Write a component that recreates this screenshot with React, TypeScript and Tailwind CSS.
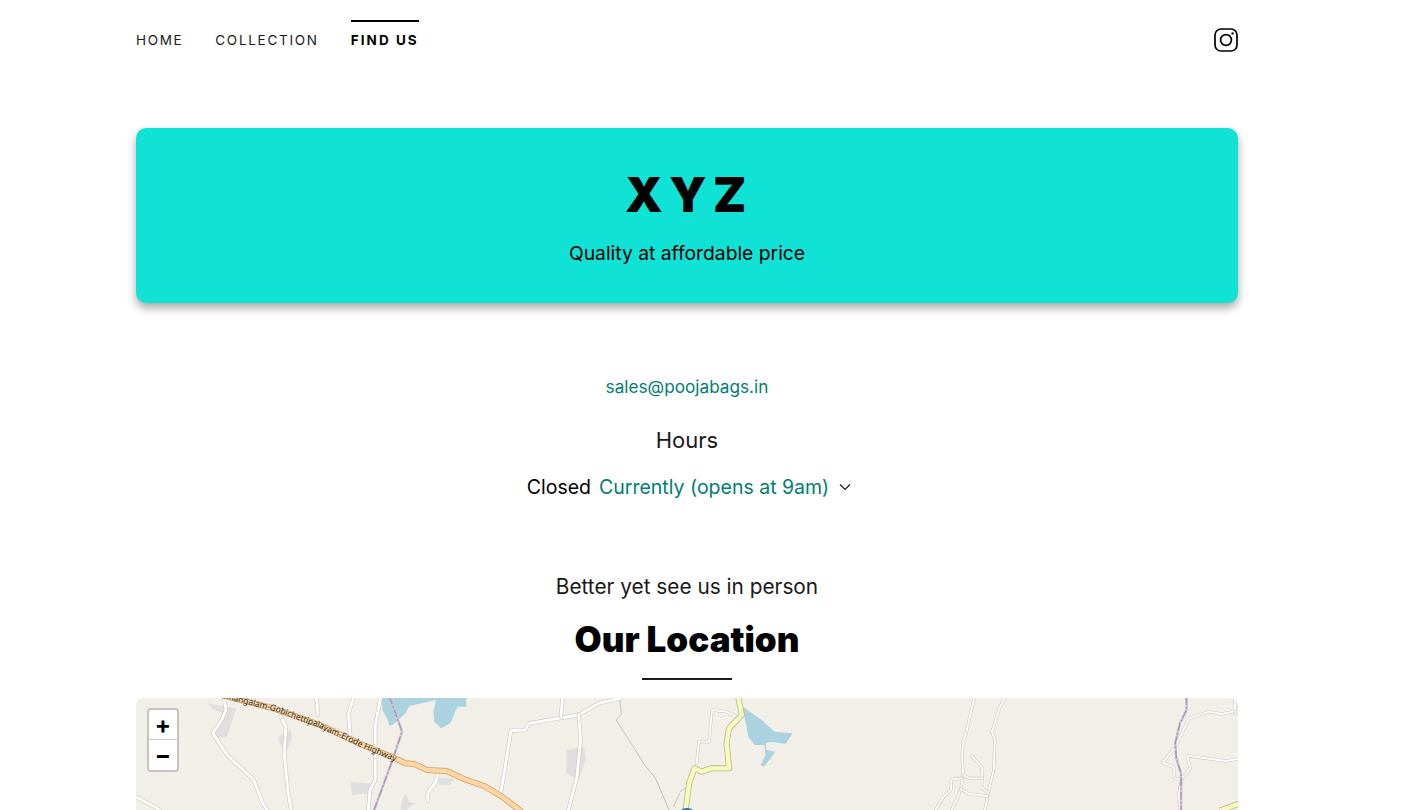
const sans = { fontFamily: '"Inter", "Liberation Sans", sans-serif' };

function Road({ d, w = 4 }: { d: string; w?: number }) {
  return (
    <>
      <path d={d} fill="none" stroke="#c9c5bf" strokeWidth={w} strokeLinejoin="round" strokeLinecap="round" vectorEffect="non-scaling-stroke" />
      <path d={d} fill="none" stroke="#ffffff" strokeWidth={w - 1.2} strokeLinejoin="round" strokeLinecap="round" vectorEffect="non-scaling-stroke" />
    </>
  );
}

function Border({ d }: { d: string }) {
  return (
    <>
      <path d={d} fill="none" stroke="#cfc6d3" strokeWidth={2.5} vectorEffect="non-scaling-stroke" />
      <path d={d} fill="none" stroke="#ac94b4" strokeWidth={1.4} strokeDasharray="8 2 2 2" vectorEffect="non-scaling-stroke" />
    </>
  );
}

function MapDrawing() {
  return (
    <svg className="block w-full h-full" viewBox="0 0 1102 400" preserveAspectRatio="xMinYMin slice">
      <rect width="1102" height="400" fill="#f2efe9" />

      {/* left half */}
      <g transform="translate(-16,-8) scale(0.357,0.3333)">
        <path d="M245 40 L325 55 L300 140 L265 145 L275 95 L290 70 L265 60 Z" fill="#e0dfdf" />
        <path d="M445 140 L480 120 L480 150 L465 185 L445 155 Z" fill="#e0dfdf" />
        <path d="M645 275 L700 280 L705 310 L650 315 Z" fill="#e0dfdf" />
        <path d="M890 265 L935 265 L925 285 L895 285 Z" fill="#e0dfdf" />
        <path d="M790 330 L800 312 L810 335 L828 340 L810 350 L800 365 L785 365 Z" fill="#e0dfdf" />
        <path d="M1250 180 L1300 170 L1305 205 L1285 270 L1250 250 Z" fill="#e0dfdf" />
        <path d="M733 20 L970 20 L970 50 L945 50 L925 100 L900 115 L880 95 L878 65 L885 30 L810 48 L800 70 L770 100 L755 108 L750 90 L735 60 Z" fill="#aad3df" />

        <Road d="M290 20 L297 60 L285 90 L260 130 L300 195 L375 270 L400 340 L415 365" />
        <Road d="M550 20 L555 75" />
        <Road d="M450 80 L465 110 L460 190 L470 300 L480 365" />
        <Road d="M655 20 L640 70 L645 135" />
        <Road d="M730 20 L715 110 L715 270 L700 300 L695 365" />
        <Road d="M45 322 L100 352 L115 365" />
        <Road d="M890 250 L885 275 L862 310 L862 332" />
        <Road d="M1065 320 L1085 190 L1095 122 L1135 120 L1145 100 L1285 75 L1340 40 L1400 25" />
        <Road d="M1285 75 L1290 150 L1280 260 L1255 365" />
        <Road d="M1240 20 L1235 80" />
        <path d="M1400 30 L1405 70 L1390 90 L1470 225 L1500 265 L1540 365" fill="none" stroke="#c4c2be" strokeWidth={1} vectorEffect="non-scaling-stroke" />
        <path d="M1568 310 L1550 350" fill="none" stroke="#c4c2be" strokeWidth={1} vectorEffect="non-scaling-stroke" />
        <Border d="M755 20 L790 125 L760 220 L710 365" />

        <path d="M285 15 L430 55 L560 105 L680 165 L770 205 L800 220 L825 222 L860 240 L915 243 L965 268 L1020 288 L1070 320 L1125 365" fill="none" stroke="#d2a05f" strokeWidth={6} vectorEffect="non-scaling-stroke" />
        <path d="M285 15 L430 55 L560 105 L680 165 L770 205 L800 220 L825 222 L860 240 L915 243 L965 268 L1020 288 L1070 320 L1125 365" fill="none" stroke="#fcd6a4" strokeWidth={4.4} vectorEffect="non-scaling-stroke" />
      </g>

      {/* road label */}
      <path id="highway-label" d="M86 -3 L138 10 L184 27 L227 47 L260 61" fill="none" />
      <text fontSize="8.4" fill="#2b2b2b" dy="2.8" textAnchor="end" style={{ fontFamily: '"Noto Sans", sans-serif' }}>
        <textPath href="#highway-label" startOffset="100%">
          Sathyamangalam-Gobichettipalayam-Erode Highway
        </textPath>
      </text>

      {/* right half */}
      <g transform="translate(544,-8) scale(0.3636,0.3333)">
        <path d="M172 50 L225 90 L260 125 L310 130 L290 162 L250 155 L236 160 L238 180 L262 185 L250 205 L230 230 L222 225 L235 195 L232 165 L205 165 L188 140 Z" fill="#aad3df" />

        <Road d="M45 230 L52 155 L80 155 L88 60 L125 65 L155 80" w={3} />
        <Road d="M130 238 L140 238" w={3} />
        <path d="M0 305 L20 290" fill="none" stroke="#c4c2be" strokeWidth={1} vectorEffect="non-scaling-stroke" />

        <path d="M160 20 L170 75 L135 115 L128 160 L135 235 L85 235 L60 245 L40 235 L25 280 L15 365" fill="none" stroke="#b9ba80" strokeWidth={6} strokeLinejoin="round" vectorEffect="non-scaling-stroke" />
        <path d="M160 20 L170 75 L135 115 L128 160 L135 235 L85 235 L60 245 L40 235 L25 280 L15 365" fill="none" stroke="#f7fabf" strokeWidth={4.4} strokeLinejoin="round" vectorEffect="non-scaling-stroke" />

        <Road d="M810 20 L795 90 L787 130 L778 155 L776 200 L779 255 L772 300 L760 330 L745 365" w={3} />
        <Road d="M898 20 L880 50 L858 125 L866 150 L863 240 L848 305 L838 365" w={3} />
        <Road d="M803 198 L830 232 L832 295 L848 310" w={3} />
        <Road d="M779 255 L795 265 L832 265" w={3} />
        <Road d="M775 265 L747 268 L745 300 L725 320 L700 365" w={3} />
        <Road d="M773 296 L795 312 L845 318" w={3} />

        <Road d="M1535 62 L1490 72 L1455 65 L1400 85 L1380 130 L1362 172 L1327 217 L1358 232 L1360 265 L1380 268 L1403 235 L1395 197 L1500 213 L1535 207" w={3} />
        <Road d="M1525 20 L1528 70" w={3} />
        <Road d="M1380 268 L1372 310 L1375 365" w={3} />
        <Border d="M1393 20 L1393 60 L1375 100 L1362 160 L1365 205 L1378 250 L1378 300 L1378 365" />

        <path d="M1485 362 L1540 340" fill="none" stroke="#b9ba80" strokeWidth={6} vectorEffect="non-scaling-stroke" />
        <path d="M1485 362 L1540 340" fill="none" stroke="#f7fabf" strokeWidth={4.4} vectorEffect="non-scaling-stroke" />
      </g>

      {/* marker */}
      <circle cx="551" cy="121" r="10.5" fill="#2a81cb" stroke="#2e6c97" />
    </svg>
  );
}

export default function App() {
  return (
    <div className="h-[810px] overflow-hidden bg-white text-[#1a1a1a]" style={sans}>
      <div className="ml-[136px] w-[1102px]">
        <nav className="flex h-[80px] items-center justify-between">
          <div className="flex h-[40px] gap-8 text-[13.5px] leading-none">
            <a className="flex items-center border-t-2 border-transparent tracking-[1.65px]">HOME</a>
            <a className="flex items-center border-t-2 border-transparent tracking-[1.72px]">COLLECTION</a>
            <a className="flex items-center border-t-2 border-black font-bold tracking-[2.05px] text-black">FIND US</a>
          </div>
          <svg width="26" height="26" viewBox="0 0 26 26" fill="none" stroke="#000" strokeWidth="1.7" className="mr-[-1px]">
            <rect x="2" y="2" width="22" height="22" rx="6" />
            <circle cx="13" cy="13" r="5.4" />
            <circle cx="19.6" cy="6.4" r="1.2" fill="#000" stroke="none" />
          </svg>
        </nav>

        <div className="mt-[48px] flex h-[175px] flex-col items-center rounded-[10px] bg-[#10e2d6] shadow-[0_5px_10px_rgba(0,0,0,0.35)]">
          <h1 className="ml-[4px] mt-[38px] text-[48px] font-black leading-[58px] tracking-[6.5px] text-black">XYZ</h1>
          <p className="mt-[15px] text-[19.3px] leading-[28px] text-black">Quality at affordable price</p>
        </div>

        <div className="flex flex-col items-center">
          <a className="mt-[72px] text-[17.2px] leading-[24px] text-[#007e70]">sales@poojabags.in</a>
          <h2 className="mt-[25px] text-[22px] leading-[32px]">Hours</h2>
          <div className="ml-[4px] mt-[17px] flex items-center text-[19.5px] leading-[28px]">
            <span className="text-black">Closed</span>
            <span className="ml-2 text-[#007e70]">Currently (opens at 9am)</span>
            <svg className="ml-[10px]" width="12" height="8" viewBox="0 0 12 8" fill="none" stroke="#1a1a1a" strokeWidth="1.2">
              <path d="M1 1.5 L6 6.5 L11 1.5" />
            </svg>
          </div>
          <p className="mt-[71px] text-[20.8px] leading-[30px]">Better yet see us in person</p>
          <h2 className="mt-[15px] text-[35px] font-black leading-[44px] text-black">Our Location</h2>
          <div className="mt-[17px] h-[2px] w-[90px] bg-[#1a1a1a]" />
        </div>

        <div className="relative mt-[18px] h-[400px] overflow-hidden rounded-[8px]">
          <MapDrawing />
          <div className="absolute left-[11px] top-[10px] w-[32px] overflow-hidden rounded-[4px] border-2 border-[#c5c3bf] bg-white text-black">
            <div className="flex h-[30px] items-center justify-center border-b border-[#ccc] text-[24px] font-bold leading-none">+</div>
            <div className="flex h-[30px] items-center justify-center text-[24px] font-bold leading-none">−</div>
          </div>
        </div>
      </div>
    </div>
  );
}
